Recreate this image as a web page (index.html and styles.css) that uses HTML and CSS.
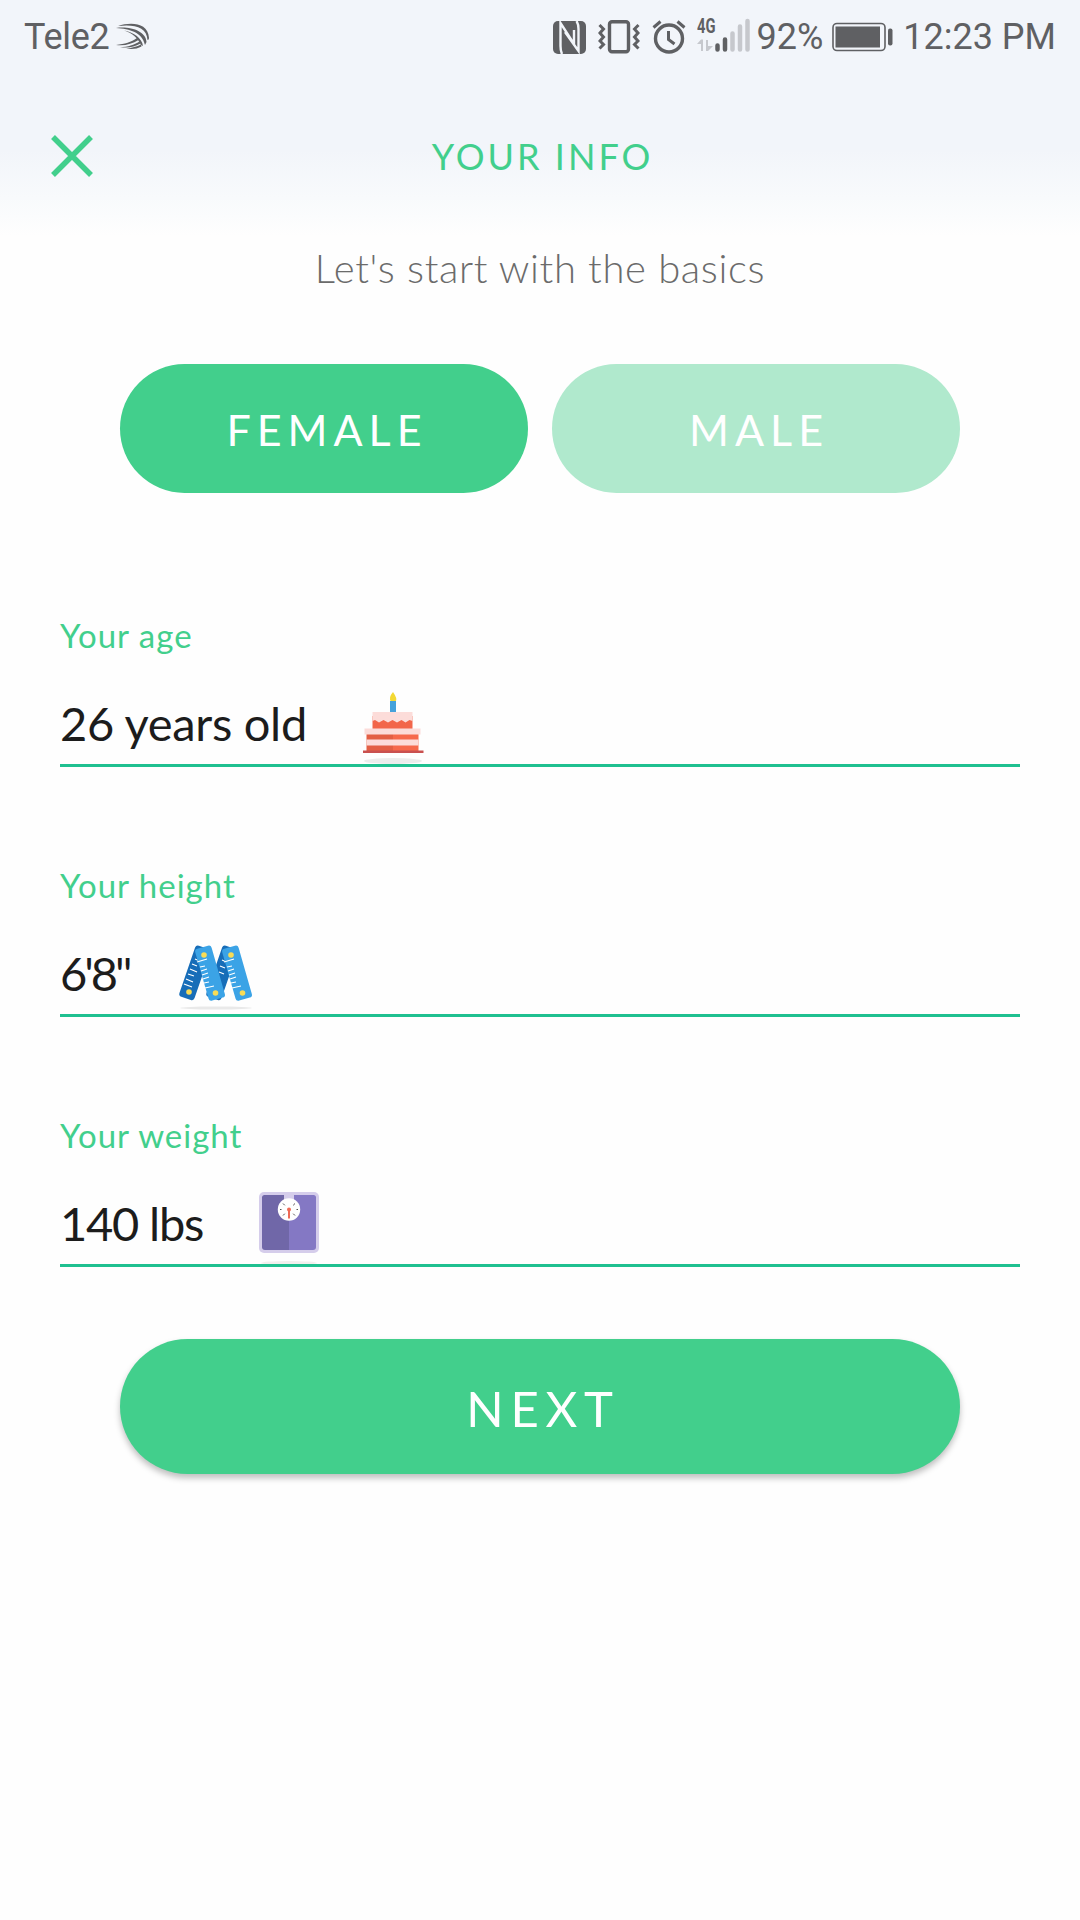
FILE: index.html
```html
<!DOCTYPE html>
<html lang="en">
<head>
  <meta charset="UTF-8" />
  <meta name="viewport" content="width=device-width, initial-scale=1.0" />
  <title>Your info</title>
  <link rel="stylesheet" href="styles.css">
</head>
<body>
  <header class="top">
    <div class="status">
      <span class="carrier">Tele2</span>
      <svg class="swift" width="36" height="28" viewBox="0 0 36 28">
        <path d="M4 3C16-1 34-1 35 15Q35 17 33.500 17C33 4 20 1 4 3Z"/>
        <path d="M2 5C16 3 32 8 32.500 19L31 22C28 9 16 6 2 5Z"/>
        <path d="M10 7.500C19 9 28 15 29 23L27 22C24 15 18 10 10 7.500Z"/>
        <path d="M2 22C11 21 17 19 23 15L24.500 17C18 21 11 23 2 22Z"/>
        <path d="M6 24C14 24 20 22 25.500 18.500L26.500 20.500C20 24 14 25.500 6 24Z"/>
        <path d="M12 25.500C18 25 23 23.500 27 21.500L27.500 23.500C23 26 18 26.500 12 25.500Z"/>
      </svg>
      <div class="indicators">
        <svg width="33" height="33" viewBox="0 0 33 33">
          <rect width="33" height="33" rx="5" fill="#5f6063"/>
          <path d="M9 33Q7.500 30 7.500 25V2L21 23V9M12 11L25.500 30V8Q25.500 3 23.500 0" fill="none" stroke="#f2f5fa" stroke-width="2.400"/>
        </svg>
        <svg class="vibrate" width="42" height="34" viewBox="0 0 42 34" fill="none" stroke="#5f6063" stroke-width="3">
          <rect x="11.500" y="1.700" width="19" height="30" rx="2.500" stroke-width="3.400"/>
          <path d="M1.500 5l4 4-3.500 4 3.500 4-3.500 4 3.500 3.500-4 4M40.500 5l-4 4 3.500 4-3.500 4 3.500 4-3.500 3.500 4 4"/>
        </svg>
        <svg class="alarm" width="34" height="34" viewBox="0 0 34 34" fill="none" stroke="#5f6063" stroke-width="3">
          <circle cx="17" cy="18.500" r="13.500" stroke-width="3.400"/>
          <path d="M16.500 11v8.500l6 4.500M1.500 7.500l7-6M32.500 7.500l-7-6"/>
        </svg>
        <svg class="signal" width="54" height="46" viewBox="0 -5 54 46">
          <text class="net" x="0" y="13.500" textLength="18.500" lengthAdjust="spacingAndGlyphs">4G</text>
          <path d="M0 25l4-4.500h2V32H4v-7zM9 21h2v6h5l-5 5H9z" fill="#c6c8cd"/>
          <path d="M20.500 26.500v4M28 20.500v10" class="on"/>
          <path d="M35.500 14.500v16M43 7.500v23M50.500 2v28.500" class="off"/>
        </svg>
        <span class="percent">92%</span>
        <svg class="battery" width="61" height="30" viewBox="0 0 61 30">
          <rect x="1" y="1.500" width="52" height="27" rx="4" fill="none" stroke="#5f6063" stroke-width="1.600"/>
          <rect x="3.500" y="4.500" width="44.500" height="21" fill="#5f6063"/>
          <rect x="56" y="6.500" width="4.500" height="17" rx="2" fill="#5f6063"/>
        </svg>
        <span class="clock">12:23 PM</span>
      </div>
    </div>
    <div class="appbar">
      <svg class="close" width="42" height="42" viewBox="0 0 42 42">
        <path d="M2 2l38 38M40 2L2 40"/>
      </svg>
      <h1>YOUR INFO</h1>
    </div>
  </header>

  <main>
    <p class="intro">Let's start with the basics</p>

    <div class="gender">
      <button class="btn">FEMALE</button>
      <button class="btn inactive">MALE</button>
    </div>

    <div class="field">
      <label>Your age</label>
      <div class="value age">
        <span>26 years old</span>
        <svg width="62" height="74" viewBox="0 0 62 74">
          <ellipse cx="31" cy="71" rx="29" ry="3" fill="#ececec"/>
          <path d="M31 2q5 7 2.500 9.500h-4.500Q26 8 31 2z" fill="#f3d833"/>
          <rect x="28" y="11" width="6" height="12" fill="#45a2db"/>
          <rect x="10.500" y="26" width="40" height="13" fill="#f2664a"/>
          <path d="M10.500 22h40v9l-3-1-4 2.500-4-2.500-4.500 2.500-4.500-2.500-4.500 2.500-4.500-2.500-4.500 2.500-4-2.500-2.500 1z" fill="#fcdcd9"/>
          <rect x="4.500" y="41" width="26.500" height="21" fill="#e35f44"/>
          <rect x="31" y="41" width="25.500" height="21" fill="#f6694c"/>
          <rect x="2.500" y="38.500" width="56" height="6" fill="#fcdcd9"/>
          <rect x="4.500" y="49.500" width="52" height="6" fill="#fcdcd9"/>
          <rect x="1" y="60.500" width="60.500" height="2.500" fill="#c9504f"/>
        </svg>
      </div>
    </div>

    <div class="field">
      <label>Your height</label>
      <div class="value height">
        <span>6'8"</span>
        <svg width="76" height="74" viewBox="0 0 76 74">
          <ellipse cx="38" cy="68" rx="36" ry="1.500" fill="#e9e9e9"/>
          <g transform="translate(0 2)">
            <g class="dark">
              <rect x="-8" y="-5" width="16" height="54" rx="3" transform="translate(24 10) rotate(19)"/>
              <rect x="-8" y="-5" width="16" height="54" rx="3" transform="translate(51 10) rotate(19)"/>
              <path class="marks" d="M17 17l7 3M14 22l5 2M12 27l7 3M10 32l6 2M8 37l7 3M6 42l8 3M44 18l7 3M42 24l5 2M41 30l5 2"/>
            </g>
            <g class="light">
              <rect x="-8.500" y="-5" width="17" height="54" rx="3" transform="translate(26 10) rotate(-16)"/>
              <rect x="-8.500" y="-5" width="17" height="54" rx="3" transform="translate(53 10) rotate(-16)"/>
              <path class="marks" d="M19 20l10-3M22 25l5-1M23 29l6-2M24 33l6-2M25 37l6-2M26 41l5-1M27 46l9-2M46 20l10-3M49 25l5-1M50 29l6-2M51 33l6-2M52 37l6-2M53 41l5-1M54 46l9-2"/>
            </g>
            <g fill="#f8dc55">
              <circle cx="26" cy="13" r="2.800"/>
              <circle cx="53" cy="13" r="2.800"/>
              <circle cx="11" cy="50" r="2.800"/>
              <circle cx="37.500" cy="51" r="2.800"/>
              <circle cx="64.500" cy="51" r="2.800"/>
            </g>
          </g>
        </svg>
      </div>
    </div>

    <div class="field">
      <label>Your weight</label>
      <div class="value weight">
        <span>140 lbs</span>
        <svg width="60" height="74" viewBox="0 0 60 74">
          <ellipse cx="30" cy="73" rx="28" ry="2" fill="#f1efed"/>
          <rect y="2" width="60" height="61" rx="5" fill="#d5cdeb"/>
          <path d="M30 5H5.500Q3 5 3 7.500V57q0 3 3 3h24z" fill="#7067a8"/>
          <path d="M30 5h24.500Q57 5 57 7.500V57q0 3-3 3H30z" fill="#8478c4"/>
          <rect x="25" y="4" width="10" height="7" fill="#d5cdeb"/>
          <circle cx="30" cy="19.500" r="11.200" fill="#fff"/>
          <path d="M24 13.500l1.800 1.800M36 13.500l-1.800 1.800M24 25.500l1.800-1.800M36 25.500l-1.800-1.800M21 19.500h1.500M37.500 19.500H39" stroke="#555" stroke-width="1"/>
          <path d="M30 19v9.500" stroke="#ef6a55" stroke-width="2"/>
          <circle cx="30" cy="19.500" r="2" fill="#ef6a55"/>
        </svg>
      </div>
    </div>

    <button class="btn next">NEXT</button>
  </main>
</body>
</html>
```
FILE: styles.css
```css
* { box-sizing: border-box; }
body {
  margin: 0;
  min-height: 1920px;
  font-family: Lato, "Open Sans", sans-serif;
  background: #fefefe;
  color: #1c1c1c;
}
.top {
  height: 241px;
  background: linear-gradient(#f2f5fa 150px, #f8fafc 198px, #fefefe 236px);
}
.status {
  display: flex;
  align-items: center;
  height: 74px;
  padding: 0 24px;
  font-family: Roboto, sans-serif;
  font-size: 36px;
  color: #5f6063;
}
.carrier { letter-spacing: -0.3px; }
.swift {
  margin-left: 5px;
  fill: #5f6063;
}
.indicators {
  display: flex;
  align-items: center;
  margin-left: auto;
}
.vibrate { margin-left: 12px; }
.alarm { margin-left: 12px; }
.signal { margin: 0 5px 0 11px; }
.net {
  font: bold 20px Roboto, sans-serif;
  fill: #5f6063;
}
.on, .off {
  stroke: #5f6063;
  stroke-width: 4.500;
  stroke-linecap: round;
}
.off { stroke: #c6c8cd; }
.battery { margin: 0 10px 0 9px; }
.appbar {
  display: grid;
  grid-template-columns: 42px 1fr 42px;
  align-items: center;
  height: 164px;
  padding: 0 51px;
}
.close {
  fill: none;
  stroke: #42cf8c;
  stroke-width: 5.500;
}
h1 {
  margin: 0;
  padding-left: 5px;
  text-align: center;
  font-size: 36px;
  font-weight: 400;
  letter-spacing: 3px;
  color: #42cf8c;
}
main { padding: 0 60px; }
.intro {
  margin: 0;
  text-align: center;
  font-size: 40px;
  font-weight: 300;
  line-height: 55px;
  letter-spacing: 0.650px;
  color: #6b6b6b;
}
.gender {
  display: flex;
  gap: 24px;
  margin: 68px 60px 122px;
}
.btn {
  flex: 1;
  height: 129px;
  padding: 2px 0 0 6px;
  border: none;
  border-radius: 68px;
  background: #42cf8c;
  color: #fff;
  font-family: inherit;
  font-size: 43px;
  letter-spacing: 6px;
}
.inactive { background: #b0e9cd; }
.field {
  height: 152px;
  margin-bottom: 98px;
  border-bottom: 3px solid #1fc090;
}
label {
  display: block;
  font-size: 33px;
  line-height: 41px;
  letter-spacing: 1px;
  color: #42cf8c;
}
.value {
  display: flex;
  height: 74px;
  margin-top: 34px;
  font-size: 47px;
  line-height: 66px;
}
.value > span { white-space: nowrap; }
.age > span {
  width: 302px;
  letter-spacing: -0.300px;
}
.height > span {
  width: 118px;
  letter-spacing: -3px;
}
.weight > span {
  width: 199px;
  letter-spacing: -1.200px;
}
.dark { fill: #176db8; }
.light { fill: #3ba3e6; }
.marks {
  fill: none;
  stroke: #fff;
  stroke-width: 1.200;
}
.next {
  display: block;
  width: 840px;
  height: 135px;
  margin: -26px auto 0;
  font-size: 49px;
  letter-spacing: 6.800px;
  box-shadow: 0 4px 6px rgba(0, 0, 0, 0.25);
}
```
